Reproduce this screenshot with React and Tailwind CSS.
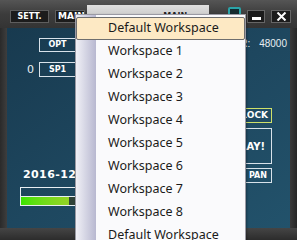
export default function App() {
  const items = [
    'Workspace 1',
    'Workspace 2',
    'Workspace 3',
    'Workspace 4',
    'Workspace 5',
    'Workspace 6',
    'Workspace 7',
    'Workspace 8',
    'Default Workspace',
  ]

  return (
    <div className="relative w-[297px] h-[240px] overflow-hidden bg-[#353535] font-['DejaVu_Sans',sans-serif]">
      {/* title bar */}
      <div className="flex h-[28px] bg-gradient-to-b from-[#555555] via-[#3c3c3c] to-[#343434]">
        <div className="ml-[10px] mt-[10px] flex h-[13px] w-[39px] items-center justify-center border border-[#5e5e5e] bg-[#1c1c1c] text-[8px] font-bold text-white">
          SETT.
        </div>
        <div className="ml-[6px] mt-[10px] flex h-[13px] w-[30px] items-center overflow-hidden border border-[#5e5e5e] bg-[#1c1c1c] pl-[2px] text-[9px] font-bold text-white">
          MAIN
        </div>
        <div className="ml-[2px] mt-[5px] flex h-[23px] w-[122px] items-start bg-gradient-to-b from-[#e0e0e0] to-[#b4b4b4] pl-[4px] pt-[7px]">
          <span className="font-['Liberation_Sans',sans-serif] text-[13px] font-bold leading-none text-[#cc2a2a]">SDRuno</span>
          <span className="ml-[21px] pt-[1px] text-[8px] font-bold leading-none text-[#222]">MAIN</span>
        </div>
        <div className="ml-[19px] mt-[7px] h-[14px] w-[13px] rounded-[2px] border-2 border-[#2aa3a8] bg-[#142a30]" />
        <div className="ml-[6px] mt-[10px] flex h-[13px] w-[18px] items-end justify-center border border-[#666] bg-[#1c1c1c] pb-[2px]">
          <div className="h-[3px] w-[9px] bg-white" />
        </div>
        <div className="ml-[6px] mt-[10px] flex h-[13px] w-[20px] items-center justify-center border border-[#666] bg-[#1c1c1c]">
          <svg width="11" height="9" viewBox="0 0 11 9">
            <path d="M1.5 0.5 L9.5 8.5 M9.5 0.5 L1.5 8.5" stroke="#fff" strokeWidth="2" />
          </svg>
        </div>
      </div>

      {/* body */}
      <div className="flex h-[200px]">
        <div className="w-[7px] bg-gradient-to-r from-[#2a2a2a] to-[#3e3e3e]" />
        <div className="flex w-[283px] justify-between bg-gradient-to-br from-[#183a4f] via-[#1e475f] to-[#22526b]">
          {/* left column */}
          <div className="flex flex-col pl-[13px] pt-[10px]">
            <div className="ml-[19px] flex h-[14px] w-[37px] items-center justify-center border border-[#d8e2ea] text-[8px] font-bold text-white">
              OPT
            </div>
            <div className="mt-[10px] flex items-center">
              <span className="w-[19px] pl-[7px] text-[11px] leading-none text-[#e8eef2]">0</span>
              <div className="flex h-[15px] w-[37px] items-center justify-center border border-[#d8e2ea] text-[8px] font-bold text-white">
                SP1
              </div>
            </div>
            <div className="mt-[92px] pl-[3px] text-[11px] font-bold leading-none tracking-[0.4px] text-white">2016-12-05</div>
            <div className="mt-[7px] flex h-[19px] w-[60px] flex-col border border-[#e8eef2]">
              <div className="h-[8px]" />
              <div className="flex flex-1 border-t border-[#e8eef2]">
                <div className="w-[48px] bg-gradient-to-r from-[#38e400] to-[#94d226]" />
                <div className="flex-1 bg-[#2f4238]" />
              </div>
            </div>
          </div>
          {/* right column */}
          <div className="flex flex-col items-end pr-[3px] pt-[11px]">
            <div className="flex font-['Liberation_Sans',sans-serif] text-[10px] leading-none text-[#e8eef2]">
              <span>SR:</span>
              <span className="ml-[9px]">48000</span>
            </div>
            <div className="mr-[15px] mt-[59px] flex h-[15px] w-[40px] items-center justify-end border border-[#cfe06a] pr-[3px] text-[9px] font-bold text-white">
              LOCK
            </div>
            <div className="mr-[15px] mt-[5px] flex h-[36px] w-[44px] items-center justify-end border border-[#d8e2ea] pr-[6px] text-[10px] font-bold text-white">
              PLAY!
            </div>
            <div className="mr-[15px] mt-[4px] flex h-[15px] w-[40px] items-center justify-end border border-[#d8e2ea] pr-[4px] text-[8px] font-bold text-white">
              PAN
            </div>
          </div>
        </div>
        <div className="w-[7px] bg-gradient-to-r from-[#3a3a3a] to-[#262626]" />
      </div>
      <div className="h-[12px] bg-gradient-to-b from-[#454545] to-[#2c2c2c]" />

      {/* workspace dropdown menu */}
      <div className="absolute left-[75px] top-[14px] w-[171px] border border-[#9a9aa4] bg-[#fafafc] pt-[2px] pb-[1px] shadow-[1px_1px_2px_rgba(0,0,0,0.3)] font-['Noto_Sans',sans-serif]">
        <div className="absolute bottom-0 left-0 top-0 w-[20px] bg-gradient-to-r from-[#f0f0f6] to-[#b8b8d0]" />
        <div className="relative flex h-[23px] items-center rounded-[2px] border border-[#6e6e6e] bg-[#fde9c4] pl-[31px] text-[12.5px] text-[#1a1a1a]">
          Default Workspace
        </div>
        {items.map((label) => (
          <div key={label} className="relative flex h-[23px] items-center pl-[32px] text-[12.5px] text-[#1a1a1a]">
            {label}
          </div>
        ))}
      </div>
    </div>
  )
}
